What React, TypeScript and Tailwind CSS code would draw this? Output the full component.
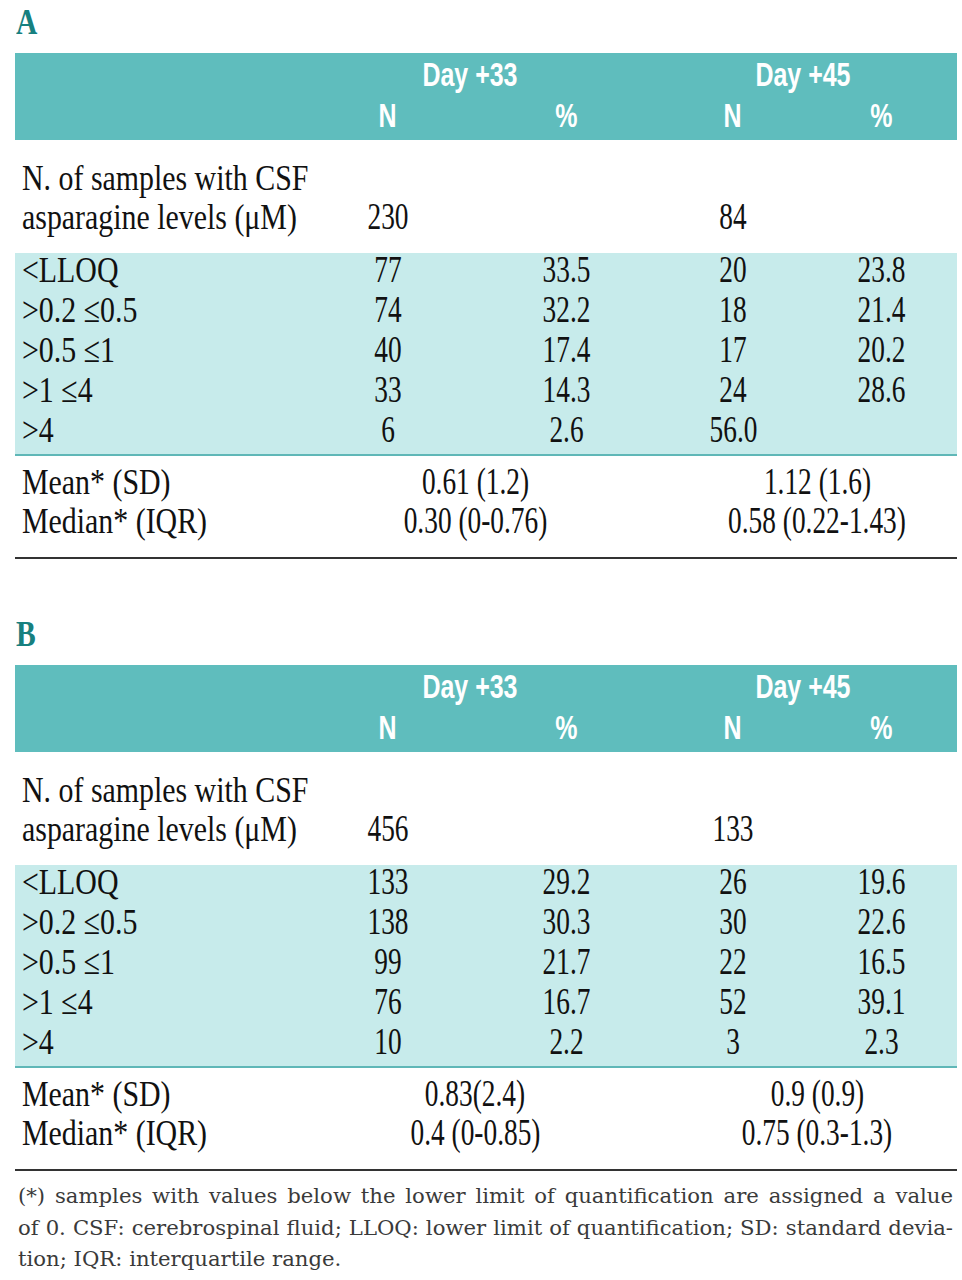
import React from 'react';

type Row = { label: string; n1: string; p1: string; n2: string; p2: string };

type Panel = {
  letter: string;
  total1: string;
  total2: string;
  rows: Row[];
  mean: [string, string];
  median: [string, string];
};

const panels: Panel[] = [
  {
    letter: 'A',
    total1: '230',
    total2: '84',
    rows: [
      { label: '<LLOQ', n1: '77', p1: '33.5', n2: '20', p2: '23.8' },
      { label: '>0.2 ≤0.5', n1: '74', p1: '32.2', n2: '18', p2: '21.4' },
      { label: '>0.5 ≤1', n1: '40', p1: '17.4', n2: '17', p2: '20.2' },
      { label: '>1 ≤4', n1: '33', p1: '14.3', n2: '24', p2: '28.6' },
      { label: '>4', n1: '6', p1: '2.6', n2: '56.0', p2: '' },
    ],
    mean: ['0.61 (1.2)', '1.12 (1.6)'],
    median: ['0.30 (0-0.76)', '0.58 (0.22-1.43)'],
  },
  {
    letter: 'B',
    total1: '456',
    total2: '133',
    rows: [
      { label: '<LLOQ', n1: '133', p1: '29.2', n2: '26', p2: '19.6' },
      { label: '>0.2 ≤0.5', n1: '138', p1: '30.3', n2: '30', p2: '22.6' },
      { label: '>0.5 ≤1', n1: '99', p1: '21.7', n2: '22', p2: '16.5' },
      { label: '>1 ≤4', n1: '76', p1: '16.7', n2: '52', p2: '39.1' },
      { label: '>4', n1: '10', p1: '2.2', n2: '3', p2: '2.3' },
    ],
    mean: ['0.83(2.4)', '0.9 (0.9)'],
    median: ['0.4 (0-0.85)', '0.75 (0.3-1.3)'],
  },
];

const serif = "font-['Liberation_Serif','Times_New_Roman',serif]";
const sans = "font-['Liberation_Sans',Arial,sans-serif]";
const cols = 'grid grid-cols-[290px_166px_190px_144px_152px]';

// condensed serif text, left anchored
const L = ({ children }: { children: React.ReactNode }) => (
  <span className="inline-block origin-left scale-x-[0.83] whitespace-nowrap">{children}</span>
);

// condensed serif text, centred
const C = ({ children }: { children: React.ReactNode }) => (
  <span className="inline-block origin-center scale-x-[0.76] scale-y-[1.03] whitespace-nowrap">{children}</span>
);

// condensed bold sans for the header
const H = ({ children }: { children: React.ReactNode }) => (
  <span className="inline-block origin-center scale-x-[0.78] scale-y-[1.05] whitespace-nowrap">{children}</span>
);

const Table = ({ p, last }: { p: Panel; last?: boolean }) => (
  <section className={last ? '' : 'mb-[53px]'}>
    <div className="h-[53px] pt-[4px] pl-[1px]">
      <span className={`${serif} inline-block origin-left scale-x-[0.82] text-[36px] leading-[36px] font-bold text-[#17807f]`}>
        {p.letter}
      </span>
    </div>

    <div className={`${sans} h-[87px] bg-[#5fbdbd] text-white font-bold text-[32px]`}>
      <div className="grid grid-cols-[290px_356px_296px] h-[42px] pt-[1px] leading-[40px]">
        <div />
        <div className="text-center pr-[26px]"><H>Day +33</H></div>
        <div className="text-center pr-[12px]"><H>Day +45</H></div>
      </div>
      <div className={`${cols} leading-[40px]`}>
        <div />
        <div className="text-center"><H>N</H></div>
        <div className="text-center"><H>%</H></div>
        <div className="text-center"><H>N</H></div>
        <div className="text-center"><H>%</H></div>
      </div>
    </div>

    <div className={`${serif} text-[36px] text-[#111]`}>
      <div className="h-[113px] pt-[19px] leading-[39px]">
        <div className="pl-[7px]"><L>N. of samples with CSF</L></div>
        <div className={cols}>
          <div className="pl-[7px]"><L>asparagine levels (μM)</L></div>
          <div className="text-center"><C>{p.total1}</C></div>
          <div />
          <div className="text-center"><C>{p.total2}</C></div>
          <div />
        </div>
      </div>

      <div className="bg-[#c7ebeb] pb-[1px] border-b-2 border-[#5fb7b7]">
        {p.rows.map((r) => (
          <div key={r.label} className={`${cols} h-[40px] leading-[34px]`}>
            <div className="pl-[7px]"><L>{r.label}</L></div>
            <div className="text-center"><C>{r.n1}</C></div>
            <div className="text-center"><C>{r.p1}</C></div>
            <div className="text-center"><C>{r.n2}</C></div>
            <div className="text-center"><C>{r.p2}</C></div>
          </div>
        ))}
      </div>

      <div className="pt-[8px] pb-[15px] border-b-2 border-[#333]">
        {[
          ['Mean* (SD)', p.mean],
          ['Median* (IQR)', p.median],
        ].map(([label, v]) => (
          <div key={label as string} className="grid grid-cols-[290px_356px_296px] h-[39px] leading-[37px]">
            <div className="pl-[7px]"><L>{label as string}</L></div>
            <div className="text-center pr-[16px]"><C>{(v as string[])[0]}</C></div>
            <div className="text-center pl-[16px]"><C>{(v as string[])[1]}</C></div>
          </div>
        ))}
      </div>
    </div>
  </section>
);

export default function App() {
  return (
    <div className="w-[962px] h-[1280px] bg-white px-[15px] overflow-hidden">
      <div className="w-[942px]">
        <Table p={panels[0]} />
        <Table p={panels[1]} last />
        <div className="font-['DejaVu_Serif','Liberation_Serif',serif] pt-[9px] pl-[3px] pr-[4px] text-[21.2px] leading-[31.5px] text-[#3a3a3a]">
          <div className="text-justify [text-align-last:justify] whitespace-nowrap">
            (*) samples with values below the lower limit of quantification are assigned a value
          </div>
          <div className="text-justify [text-align-last:justify] whitespace-nowrap">
            of 0. CSF: cerebrospinal fluid; LLOQ: lower limit of quantification; SD: standard devia-
          </div>
          <div>tion; IQR: interquartile range.</div>
        </div>
      </div>
    </div>
  );
}
